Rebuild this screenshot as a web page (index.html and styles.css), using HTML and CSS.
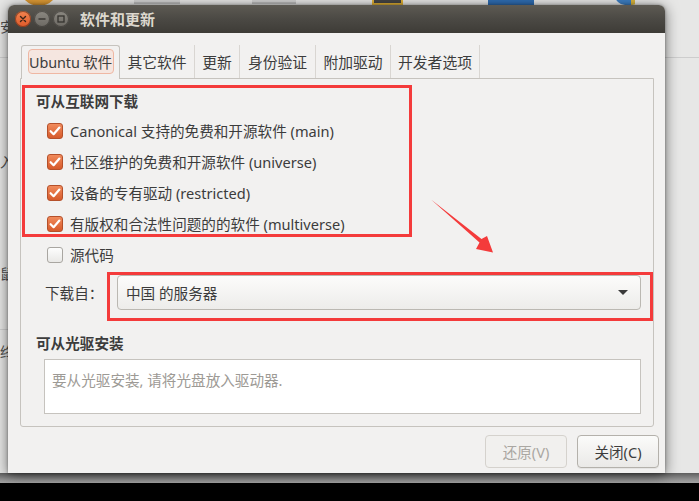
FILE: index.html
```html
<!DOCTYPE html>
<html lang="zh-CN">
<head>
<meta charset="utf-8">
<title>软件和更新</title>
<link rel="stylesheet" href="styles.css">
</head>
<body>
<div class="screen">
  <div class="desktop">
    <div class="bg-icon orb"></div>
    <div class="bg-icon monitor m1"></div>
    <div class="bg-icon monitor m2"></div>
    <div class="bg-icon darksq"></div>
    <div class="bg-icon bluesq"></div>
    <div class="bg-icon bird"></div>
    <div class="bg-left">
      <span class="bg-char c1">安</span>
      <span class="bg-char c2">入</span>
      <span class="bg-char c3">鼠</span>
      <span class="bg-char c4">终</span>
      <span class="bg-rule r1"></span>
      <span class="bg-rule r2"></span>
    </div>
    <div class="bg-right-rule"></div>
    <div class="bottom-band"></div>

    <section class="window">
      <header class="titlebar">
        <div class="controls">
          <span class="ctl ctl-close">
            <svg width="16" height="16" viewBox="0 0 16 16"><path d="M5.5 5.5 L10.5 10.5 M10.5 5.5 L5.5 10.5" stroke="#3a2418" stroke-width="1.4" stroke-linecap="round"/></svg>
          </span>
          <span class="ctl">
            <svg width="16" height="16" viewBox="0 0 16 16"><path d="M4.5 8 H11.5" stroke="#35332f" stroke-width="1.4"/></svg>
          </span>
          <span class="ctl">
            <svg width="16" height="16" viewBox="0 0 16 16"><rect x="5" y="5" width="6" height="6" fill="none" stroke="#35332f" stroke-width="1.3"/></svg>
          </span>
        </div>
        <h1 class="title">软件和更新</h1>
      </header>

      <div class="win-body">
        <nav class="tabs">
          <div class="tab tab-active"><span class="focus-ring">Ubuntu 软件</span></div>
          <div class="tab t2">其它软件</div>
          <div class="tab t3">更新</div>
          <div class="tab t4">身份验证</div>
          <div class="tab t5">附加驱动</div>
          <div class="tab t6">开发者选项</div>
        </nav>

        <div class="panel">
          <h2 class="section-title">可从互联网下载</h2>
          <ul class="checks">
            <li class="check-row"><span class="box checked"><svg width="16" height="16" viewBox="0 0 16 16"><path d="M3.6 8.2 L6.6 11.2 L12.4 4.6" fill="none" stroke="#fff" stroke-width="2.2" stroke-linecap="round" stroke-linejoin="round"/></svg></span><span>Canonical 支持的免费和开源软件 (main)</span></li>
            <li class="check-row"><span class="box checked"><svg width="16" height="16" viewBox="0 0 16 16"><path d="M3.6 8.2 L6.6 11.2 L12.4 4.6" fill="none" stroke="#fff" stroke-width="2.2" stroke-linecap="round" stroke-linejoin="round"/></svg></span><span>社区维护的免费和开源软件 (universe)</span></li>
            <li class="check-row"><span class="box checked"><svg width="16" height="16" viewBox="0 0 16 16"><path d="M3.6 8.2 L6.6 11.2 L12.4 4.6" fill="none" stroke="#fff" stroke-width="2.2" stroke-linecap="round" stroke-linejoin="round"/></svg></span><span>设备的专有驱动 (restricted)</span></li>
            <li class="check-row"><span class="box checked"><svg width="16" height="16" viewBox="0 0 16 16"><path d="M3.6 8.2 L6.6 11.2 L12.4 4.6" fill="none" stroke="#fff" stroke-width="2.2" stroke-linecap="round" stroke-linejoin="round"/></svg></span><span>有版权和合法性问题的的软件 (multiverse)</span></li>
            <li class="check-row"><span class="box"></span><span>源代码</span></li>
          </ul>

          <div class="source-row">
            <span class="source-label">下载自：</span>
            <div class="combo">
              <span>中国 的服务器</span>
              <span class="caret"></span>
            </div>
          </div>

          <h2 class="section-title cd-title">可从光驱安装</h2>
          <div class="cd-box">要从光驱安装, 请将光盘放入驱动器.</div>
        </div>

        <div class="actions">
          <button class="btn" disabled>还原(V)</button>
          <button class="btn btn-primary">关闭(C)</button>
        </div>
      </div>
    </section>

    <svg class="annotations" width="699" height="483" viewBox="0 0 699 483">
      <rect x="23.5" y="86.5" width="387" height="149" fill="none" stroke="#f43b3b" stroke-width="3"/>
      <rect x="108.5" y="273.5" width="543" height="46" fill="none" stroke="#f43b3b" stroke-width="3"/>
      <polygon points="431,199.5 481.5,239 487,236 493,252.5 476,249 479.5,242.5" fill="#f43b3b"/>
    </svg>
  </div>
  <div class="taskbar"></div>
</div>
</body>
</html>
```

FILE: styles.css
```css
* {
  box-sizing: border-box;
  margin: 0;
  padding: 0;
}

html, body {
  width: 699px;
  height: 501px;
  overflow: hidden;
}

body {
  font-family: "Noto Sans", "Noto Sans CJK SC", sans-serif;
  color: #3c3c3c;
  background: #000;
}

.screen {
  width: 699px;
  height: 501px;
  display: flex;
  flex-direction: column;
}

.desktop {
  position: relative;
  height: 483px;
  background: #e7e7e6;
  overflow: hidden;
}

.taskbar {
  height: 18px;
  background: #000;
}

/* ---------- background desktop bits ---------- */
.bg-icon {
  position: absolute;
}

.orb {
  left: 20px;
  top: -32px;
  width: 38px;
  height: 38px;
  border-radius: 50%;
  background: radial-gradient(circle at 50% 40%, #f7e3a0 0 30%, #e7a23a 45%, #c98a2a 100%);
}

.monitor {
  top: -10px;
  height: 14px;
  background: #d2d2d2;
  border-bottom: 2px solid #bdbdbd;
}

.m1 { left: 134px; width: 46px; }
.m2 { left: 252px; width: 44px; }

.darksq {
  left: 372px;
  top: -20px;
  width: 31px;
  height: 25px;
  background: #444;
  border: 2px solid #e2b236;
}

.bluesq {
  left: 488px;
  top: -20px;
  width: 46px;
  height: 25px;
  background: #2f6db2;
}

.bird {
  left: 615px;
  top: -20px;
  width: 27px;
  height: 25px;
  border-radius: 0 0 10px 10px;
  background: linear-gradient(90deg, #3d7fc4 60%, #d9b53c 60% 75%, #e8e8e8 75%);
}

.bg-left {
  position: absolute;
  left: 0;
  top: 0;
  width: 24px;
  height: 483px;
}

.bg-char {
  position: absolute;
  left: 0;
  font-size: 14px;
  line-height: 16px;
  color: #4e4e4e;
}

.c1 { top: 19px; }
.c2 { top: 154px; }
.c3 { top: 266px; }
.c4 { top: 344px; }

.bg-rule {
  position: absolute;
  left: 0;
  width: 10px;
  height: 1px;
  background: #cfcfcf;
}

.r1 { top: 57px; }
.r2 { top: 329px; }

.bg-right-rule {
  position: absolute;
  left: 665px;
  top: 57px;
  width: 34px;
  height: 1px;
  background: #cdcdcd;
}

.bottom-band {
  position: absolute;
  left: 0;
  bottom: 0;
  width: 699px;
  height: 10px;
  background: linear-gradient(#5e5e5e, #8e8e8e 60%, #a4a4a4);
}

/* ---------- window ---------- */
.window {
  position: absolute;
  left: 8px;
  top: 5px;
  width: 657px;
  height: 468px;
  display: flex;
  flex-direction: column;
  background: #f2f1f0;
  border-radius: 6px 6px 0 0;
  box-shadow: 0 2px 14px rgba(0, 0, 0, 0.55), 0 0 3px rgba(0, 0, 0, 0.35);
}

.titlebar {
  height: 28px;
  flex: none;
  display: flex;
  align-items: center;
  padding-left: 7px;
  background: linear-gradient(#5d5a53, #4b4944 50%, #3e3c37);
  border-radius: 6px 6px 0 0;
}

.controls {
  display: flex;
  gap: 3px;
}

.ctl {
  width: 16px;
  height: 16px;
  border-radius: 50%;
  display: flex;
  background: linear-gradient(#8b8881, #6c6963);
  box-shadow: inset 0 0 0 1px rgba(40, 38, 34, 0.55);
}

.ctl-close {
  background: linear-gradient(#f28450, #dd5a2a);
  box-shadow: inset 0 0 0 1px rgba(90, 40, 20, 0.6);
}

.title {
  margin-left: 11px;
  font-size: 15px;
  font-weight: 700;
  color: #dcd8ce;
  line-height: 28px;
}

.win-body {
  flex: 1;
  display: flex;
  flex-direction: column;
  padding: 12px 11px 6px 12px;
}

/* ---------- tabs ---------- */
.tabs {
  display: flex;
  height: 34px;
  margin-bottom: -1px;
  position: relative;
  z-index: 1;
}

.tab {
  height: 33px;
  display: flex;
  align-items: center;
  justify-content: center;
  font-size: 14.8px;
  color: #3c3c3c;
  white-space: nowrap;
  border-right: 1px solid #d9d6d2;
}

.tab-active {
  width: 99px;
  height: 34px;
  margin-left: 1px;
  align-items: flex-start;
  padding-top: 3px;
  border: 1px solid #c6c3be;
  border-bottom: none;
  border-radius: 3px 3px 0 0;
  background: #f2f1f0;
}

.focus-ring {
  width: 86px;
  height: 25px;
  flex: none;
  display: flex;
  align-items: center;
  justify-content: center;
  white-space: nowrap;
  font-size: 14.4px;
  letter-spacing: -0.1px;
  border: 1px solid #efb7a3;
  border-radius: 4px;
  background: #f5e6e0;
}

.t2 { width: 75px; }
.t3 { width: 45px; }
.t4 { width: 76px; }
.t5 { width: 75px; }
.t6 { width: 89px; }

/* ---------- panel ---------- */
.panel {
  width: 634px;
  height: 349px;
  border: 1px solid #c6c3be;
  border-radius: 0 0 3px 3px;
  padding: 11px 12px 11px 15px;
  display: flex;
  flex-direction: column;
}

.section-title {
  height: 22px;
  line-height: 22px;
  font-size: 14.6px;
  font-weight: 700;
  color: #3c3c3c;
}

.checks {
  list-style: none;
  margin-top: 3px;
}

.check-row {
  height: 31px;
  display: flex;
  align-items: center;
  gap: 7px;
  padding-left: 11px;
  font-size: 14.6px;
}

.box {
  width: 16px;
  height: 16px;
  flex: none;
  border-radius: 3px;
  border: 1px solid #a9a6a1;
  background: linear-gradient(#fdfdfd, #e9e8e6);
  display: flex;
  align-items: center;
  justify-content: center;
}

.box.checked {
  border-color: #b5502a;
  background: linear-gradient(#f18b5c, #d65a2b);
}

.box svg {
  flex: none;
}

.source-row {
  margin-top: 5px;
  height: 35px;
  display: flex;
  align-items: center;
  padding-left: 9px;
}

.source-label {
  width: 72px;
  flex: none;
  font-size: 14.6px;
}

.combo {
  flex: 1;
  height: 35px;
  display: flex;
  align-items: center;
  justify-content: space-between;
  padding: 0 12px 0 8px;
  border: 1px solid #bbb8b2;
  border-radius: 4px;
  background: linear-gradient(#fcfcfb, #edecea);
  font-size: 14.6px;
  color: #3c3c3c;
}

.caret {
  width: 0;
  height: 0;
  border-left: 5px solid transparent;
  border-right: 5px solid transparent;
  border-top: 5px solid #3a3a3a;
}

.cd-title {
  margin-top: 22px;
}

.cd-box {
  margin-top: 5px;
  margin-left: 8px;
  height: 55px;
  border: 1px solid #c6c3be;
  background: #fff;
  padding: 9px 7px;
  font-size: 14.6px;
  line-height: 22px;
  color: #9d9a95;
}

/* ---------- buttons ---------- */
.actions {
  margin-top: 8px;
  margin-right: -5px;
  display: flex;
  justify-content: flex-end;
  gap: 10px;
}

.btn {
  width: 82px;
  height: 33px;
  border-radius: 4px;
  border: 1px solid #d5d2cd;
  background: #f1f0ee;
  font-family: "Noto Sans", "Noto Sans CJK SC", sans-serif;
  font-size: 14.6px;
  color: #aaa7a2;
}

.btn-primary {
  border-color: #b4b1ab;
  background: linear-gradient(#fbfbfa, #eae9e7);
  color: #3c3c3c;
  box-shadow: 0 1px 0 rgba(0, 0, 0, 0.05);
}

/* ---------- annotations ---------- */
.annotations {
  position: absolute;
  left: 0;
  top: 0;
  pointer-events: none;
}
```
